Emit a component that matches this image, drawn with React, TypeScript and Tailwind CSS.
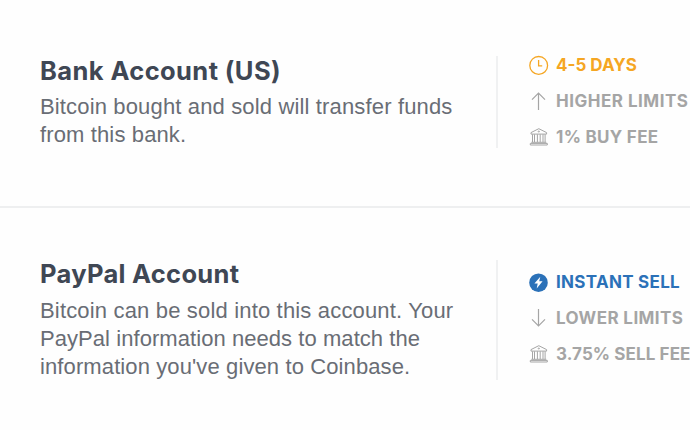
import type { ReactNode } from "react";
import clsx from "clsx";

function ClockIcon() {
  return (
    <svg width="20" height="20" viewBox="0 0 20 20" fill="none" stroke="currentColor" strokeWidth="1.3">
      <circle cx="9.7" cy="10.4" r="8.9" />
      <path d="M9.6 5v5.8h3.6" />
    </svg>
  );
}

function BoltIcon() {
  return (
    <svg width="20" height="20" viewBox="0 0 20 20">
      <circle cx="9.5" cy="10.7" r="9.3" fill="currentColor" />
      <path d="M11.3 4.8 5.4 11.6h3.3l-1 4.9 5.9-7.2h-3.4z" fill="#fff" />
    </svg>
  );
}

function ArrowIcon({ down = false }: { down?: boolean }) {
  return (
    <svg
      width="20"
      height="20"
      viewBox="0 0 20 20"
      fill="none"
      stroke="currentColor"
      strokeWidth="1.2"
      className={clsx(down && "-scale-y-100")}
    >
      <path d="M9.5 19V2M3 8.6 9.5 2 16 8.6" />
    </svg>
  );
}

function BankIcon() {
  return (
    <svg width="20" height="20" viewBox="0 0 20 20" fill="none" stroke="currentColor" strokeWidth="1">
      <path d="M2 5.6 9.8 1.7l7.8 3.9v1.5H2z" />
      <path d="M3.5 7.3v7.8M5.5 7.3v7.8M8.4 7.3v7.8M11.2 7.3v7.8M14 7.3v7.8M16.1 7.3v7.8" />
      <path d="M2.3 15.3h15M1.3 16.4h17v1.6h-17z" />
      <circle cx="9.8" cy="4.5" r=".6" />
    </svg>
  );
}

type Feature = { icon: ReactNode; label: string; className: string };

type Account = {
  title: string;
  titleClass: string;
  lines: { text: string; className: string }[];
  bodyClass: string;
  listClass: string;
  features: Feature[];
};

const accounts: Account[] = [
  {
    title: "Bank Account (US)",
    titleClass: "tracking-[0.4px]",
    lines: [
      { text: "Bitcoin bought and sold will transfer funds", className: "tracking-[0.15px]" },
      { text: "from this bank.", className: "tracking-[0.13px]" },
    ],
    bodyClass: "h-[92px]",
    listClass: "-mt-[9px]",
    features: [
      { icon: <ClockIcon />, label: "4-5 DAYS", className: "text-[#f5a623]" },
      { icon: <ArrowIcon />, label: "HIGHER LIMITS", className: "text-[#a5a5a5] tracking-[0.5px]" },
      { icon: <BankIcon />, label: "1% BUY FEE", className: "text-[#a5a5a5] tracking-[0.3px]" },
    ],
  },
  {
    title: "PayPal Account",
    titleClass: "-mt-px mb-2 tracking-[0.3px]",
    lines: [
      { text: "Bitcoin can be sold into this account. Your", className: "tracking-[0.17px]" },
      { text: "PayPal information needs to match the", className: "tracking-[0.06px]" },
      { text: "information you've given to Coinbase.", className: "tracking-[0.11px]" },
    ],
    bodyClass: "h-[120px]",
    listClass: "mt-1",
    features: [
      { icon: <BoltIcon />, label: "INSTANT SELL", className: "text-[#2b71b8] tracking-[0.3px]" },
      { icon: <ArrowIcon down />, label: "LOWER LIMITS", className: "text-[#a5a5a5] tracking-[0.4px]" },
      { icon: <BankIcon />, label: "3.75% SELL FEE", className: "text-[#a5a5a5] tracking-[0.1px]" },
    ],
  },
];

function AccountRow({ account }: { account: Account }) {
  return (
    <div className={clsx("flex", account.bodyClass)}>
      <div className="w-[456px] shrink-0 whitespace-nowrap">
        <h2
          className={clsx(
            "font-['Inter',sans-serif] text-[25.5px] leading-[30px] font-bold text-[#3f4754]",
            account.titleClass
          )}
        >
          {account.title}
        </h2>
        <p className="mt-[7px] font-['Liberation_Sans',sans-serif] text-[22px] leading-7 text-[#696d75]">
          {account.lines.map((line) => (
            <span key={line.text} className={clsx("block", line.className)}>
              {line.text}
            </span>
          ))}
        </p>
      </div>
      <ul className="h-full shrink-0 border-l-2 border-[#f0f1f2] pl-[31px] font-['Inter',sans-serif] text-[17px] font-bold whitespace-nowrap">
        {account.features.map((feature, i) => (
          <li
            key={feature.label}
            className={clsx("flex h-9 items-center gap-[7px]", i === 0 && account.listClass, feature.className)}
          >
            {feature.icon}
            <span className="pt-px">{feature.label}</span>
          </li>
        ))}
      </ul>
    </div>
  );
}

export default function App() {
  return (
    <main className="h-[430px] w-[690px] overflow-hidden bg-[#fefefe]">
      <section className="h-[208px] border-b-2 border-[#eeeff0] pt-14 pl-10">
        <AccountRow account={accounts[0]} />
      </section>
      <section className="pt-[52px] pl-10">
        <AccountRow account={accounts[1]} />
      </section>
    </main>
  );
}
